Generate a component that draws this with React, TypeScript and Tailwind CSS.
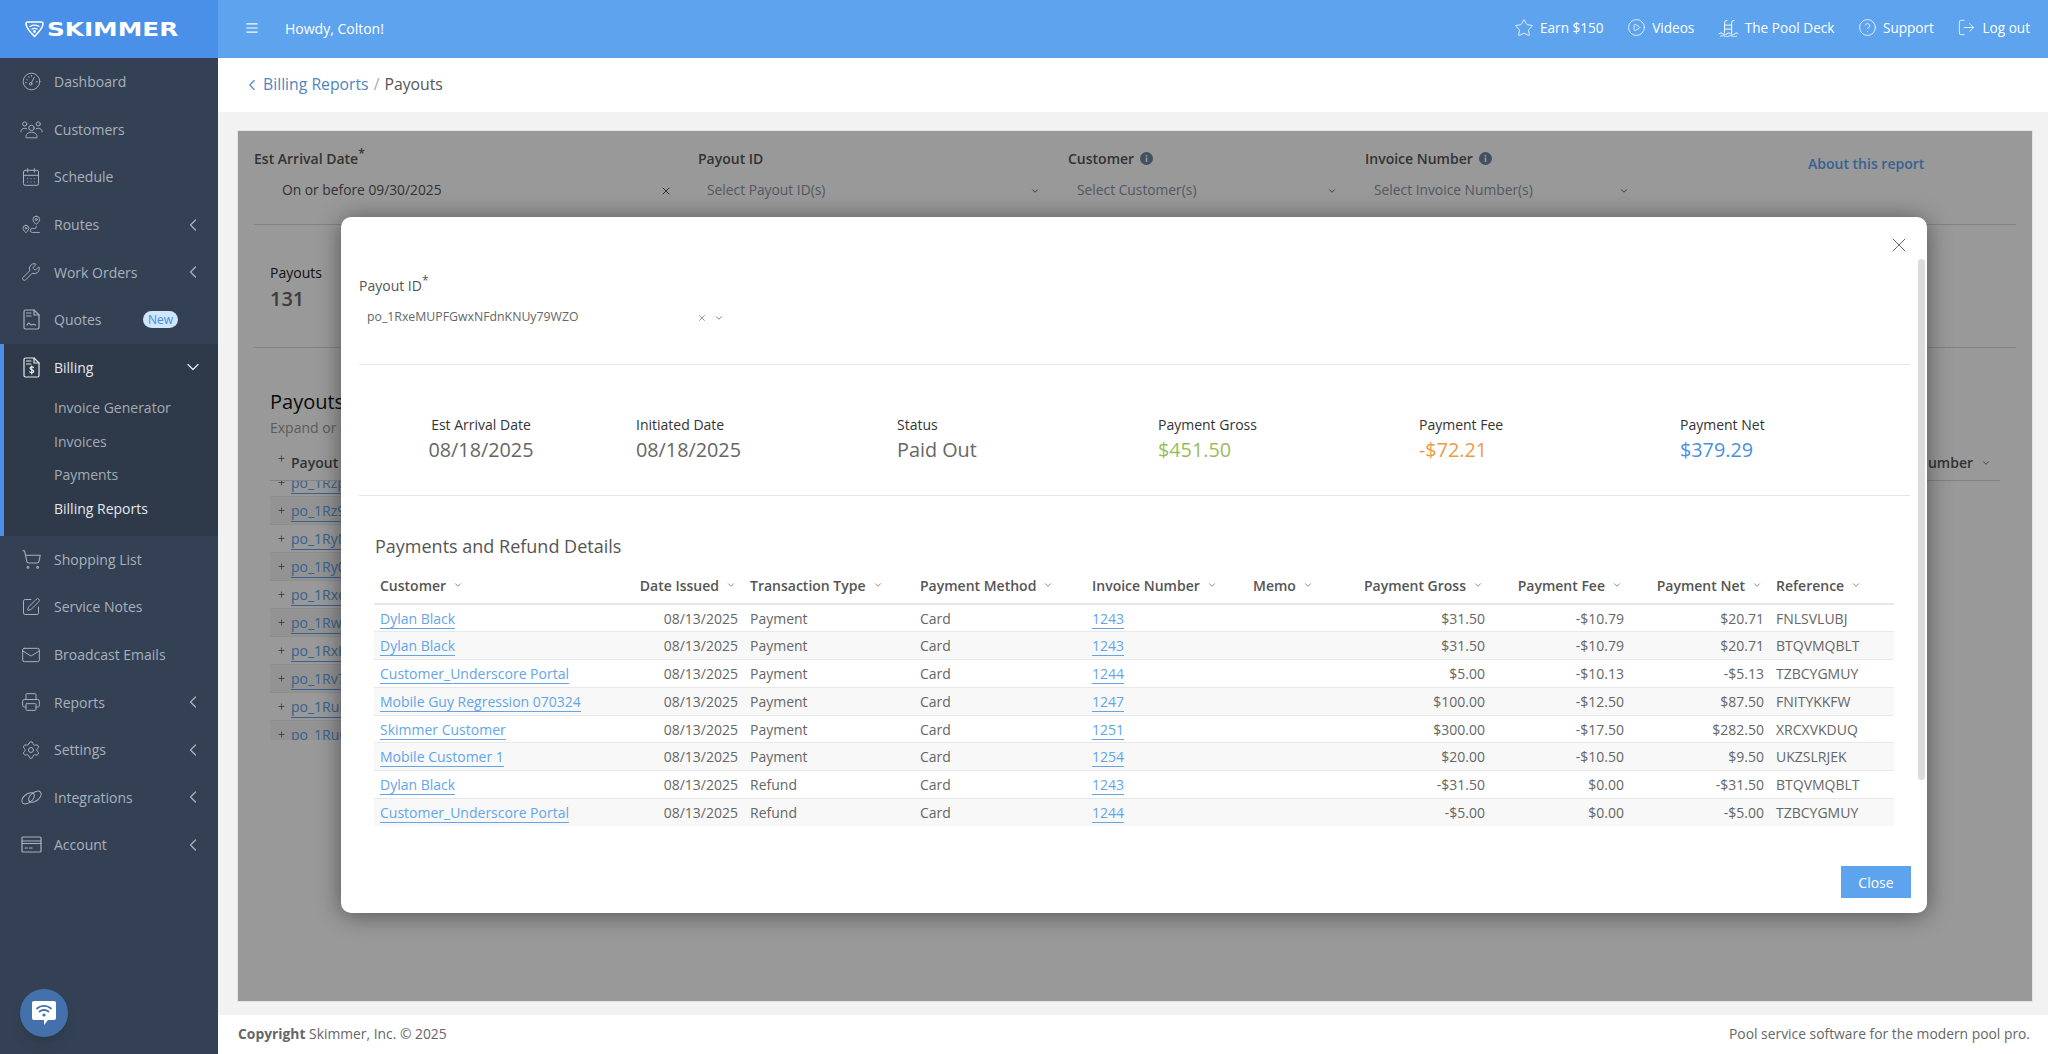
import React from "react";
import { ChevronLeft, ChevronDown, Wrench, ShoppingCart, SquarePen, Mail, Printer, Settings, CalendarDays, Star, CirclePlay, CircleHelp, LogOut, X, Plus, Menu } from "lucide-react";

const Svg = ({ w = 20, h = 20, vb = "0 0 24 24", children }: { w?: number; h?: number; vb?: string; children: React.ReactNode }) => (
  <svg width={w} height={h} viewBox={vb} fill="none" stroke="currentColor" strokeWidth={1.2} strokeLinecap="round" strokeLinejoin="round">{children}</svg>
);

const Gauge = () => (
  <Svg w={19} h={19}>
    <circle cx="12" cy="12" r="10.5" />
    <circle cx="11" cy="15" r="1.6" />
    <path d="M12 13.6 15.5 6.5M6 9.5l.8.5M8.5 5.8l.4.9M12 4.5v1M4.5 13.5h1M18 12.5h1.5" />
  </Svg>
);
const People = () => (
  <Svg w={23} h={19} vb="0 0 29 24">
    <circle cx="6" cy="5" r="2.6" /><circle cx="23" cy="5" r="2.6" /><circle cx="14.5" cy="10" r="3.4" />
    <path d="M1 15c0-3 2-4.5 5-4.5 1 0 2 .2 2.6.6M28 15c0-3-2-4.5-5-4.5-1 0-2 .2-2.6.6M7.5 22c-.5-4 2.5-6.5 7-6.5s7.500 2.500 7 6.500z" />
  </Svg>
);
const RouteIcon = () => (
  <Svg w={19} h={19}>
    <path d="M18 1.500a4.300 4.300 0 0 1 4.300 4.300c0 2.500-4.300 6.200-4.300 6.200s-4.300-3.700-4.300-6.200A4.300 4.300 0 0 1 18 1.500z" />
    <circle cx="18" cy="5.700" r="1.300" />
    <path d="M5 13a3.700 3.700 0 0 1 3.700 3.700C8.700 19 5 22.500 5 22.500S1.300 19 1.300 16.700A3.700 3.700 0 0 1 5 13z" />
    <circle cx="5" cy="16.700" r="1" />
    <path d="M18 14.500v.5a2 2 0 0 1-2 2h-3a2.500 2.500 0 0 0 0 5h9" />
  </Svg>
);
const Doc = ({ dollar }: { dollar?: boolean }) => (
  <Svg w={17} h={21} vb="0 0 17 21">
    <path d="M3 1h8l5 5v12.500a1.500 1.500 0 0 1-1.500 1.500h-12A1.500 1.500 0 0 1 1 18.500v-16A1.500 1.500 0 0 1 2.500 1z" />
    <path d="M11 1v5h5M3.500 4h4.500M3.500 7h4.500" />
    {dollar ? (
      <path d="M10.500 10.500c-.5-.8-3.500-1-3.500.8 0 2 3.800 1 3.800 3 0 1.800-3.300 1.500-4 .5M8.700 9v8" />
    ) : (
      <path d="M4 16c1-2 2-2.500 3-1s2 1 3 .500 1.500 0 2.500.5" />
    )}
  </Svg>
);
const Chain = () => (
  <Svg w={23} h={17} vb="0 0 27 20">
    <ellipse cx="9.500" cy="11" rx="8.500" ry="5" transform="rotate(-38 9.500 11)" />
    <ellipse cx="17.500" cy="9" rx="8.500" ry="5" transform="rotate(-38 17.500 9)" />
  </Svg>
);
const Card = () => (
  <Svg w={21} h={17} vb="0 0 21 17">
    <rect x="1" y="1" width="19" height="15" rx="1" />
    <path d="M1 5h19M1 7.500h19M4 12h2.500M8.500 12H11" />
  </Svg>
);
const Pool = () => (
  <Svg w={21} h={19} vb="0 0 26 24">
    <path d="M8 19V6a3 3 0 0 1 3-3M17 19V6a3 3 0 0 1 3-3M8 9h9M8 14h9" />
    <path d="M1 20c2-1.500 3-1.500 5 0s3 1.500 5 0 3-1.500 5 0 3 1.500 5 0 3-1.500 4 0M3 23c2-1 3-1 5 0s3 1 5 0 3-1 5 0 3 1 5 0" />
  </Svg>
);
const InfoDot = () => (
  <svg width="13" height="13" viewBox="0 0 13 13">
    <circle cx="6.500" cy="6.500" r="6.500" fill="#6f86a3" />
    <rect x="5.700" y="5.500" width="1.600" height="4.500" fill="#fff" />
    <rect x="5.700" y="3" width="1.600" height="1.600" fill="#fff" />
  </svg>
);

const Logo = () => (
  <div className="flex items-center text-white">
    <svg width="19" height="17" viewBox="0 0 19 17" fill="none" stroke="currentColor" strokeWidth="1.600" strokeLinecap="round" strokeLinejoin="round">
      <path d="M1 3c0-1 1-2 2-2h13c1 0 2 1 2 2 0 4-4 8-8.500 12.500C5 11 1 7 1 3z" />
      <path d="M5 5.500c2.500-1.500 6.500-1.500 9 0M7 8c1.500-.8 3.500-.8 5 0" strokeWidth="1.300" />
      <circle cx="9.500" cy="10.500" r=".6" fill="currentColor" />
    </svg>
    <span className="ml-[3px] inline-block origin-left scale-x-[1.3] font-['DejaVu_Sans',sans-serif] text-[19px] leading-none font-bold">SKIMMER</span>
  </div>
);

const NavRow = ({ icon, label, arrow, badge }: { icon: React.ReactNode; label: string; arrow?: boolean; badge?: boolean }) => (
  <div className="flex h-[47.6px] items-center pr-[15px] text-[14px] text-[#a8b1bc]">
    <span className="flex w-[54px] shrink-0 justify-center pl-[14px] pr-[6px]">{icon}</span>
    <span>{label}</span>
    {arrow && <ChevronLeft size={20} strokeWidth={1.5} className="ml-auto" />}
    {badge && <span className="mr-[25px] ml-auto flex h-[17px] w-[35px] items-center justify-center rounded-full bg-[#cfe6fb] text-[12px] leading-none text-[#3f8fdf]">New</span>}
  </div>
);

const Sidebar = () => (
  <aside className="relative flex h-full w-[218px] shrink-0 flex-col bg-[#344154]">
    <div className="flex h-[58px] shrink-0 items-center bg-[#4a90e8] pl-[25px]"><Logo /></div>
    <NavRow icon={<Gauge />} label="Dashboard" />
    <NavRow icon={<People />} label="Customers" />
    <NavRow icon={<CalendarDays size={20} strokeWidth={1.2} />} label="Schedule" />
    <NavRow icon={<RouteIcon />} label="Routes" arrow />
    <NavRow icon={<Wrench size={20} strokeWidth={1.2} />} label="Work Orders" arrow />
    <NavRow icon={<Doc />} label="Quotes" badge />
    <div className="h-[192px] border-l-4 border-[#4a90e8] bg-[#2e3a4a] text-[14px]">
      <div className="flex h-[47.600px] items-center pr-[15px] text-[#e4e7ea]">
        <span className="flex w-[50px] shrink-0 justify-center pl-[10px] pr-[6px]"><Doc dollar /></span>
        <span>Billing</span>
        <ChevronDown size={20} strokeWidth={1.500} className="ml-auto" />
      </div>
      <div className="flex flex-col pl-[50px] text-[#a3abb6]">
        <div className="flex h-[33.500px] items-center">Invoice Generator</div>
        <div className="flex h-[33.500px] items-center">Invoices</div>
        <div className="flex h-[33.500px] items-center">Payments</div>
        <div className="flex h-[33.500px] items-center text-[#e4e7ea]">Billing Reports</div>
      </div>
    </div>
    <NavRow icon={<ShoppingCart size={21} strokeWidth={1.2} />} label="Shopping List" />
    <NavRow icon={<SquarePen size={20} strokeWidth={1.2} />} label="Service Notes" />
    <NavRow icon={<Mail size={20} strokeWidth={1.2} />} label="Broadcast Emails" />
    <NavRow icon={<Printer size={20} strokeWidth={1.2} />} label="Reports" arrow />
    <NavRow icon={<Settings size={20} strokeWidth={1.2} />} label="Settings" arrow />
    <NavRow icon={<Chain />} label="Integrations" arrow />
    <NavRow icon={<Card />} label="Account" arrow />
    <button className="absolute bottom-[17px] left-[20px] flex h-[48px] w-[48px] items-center justify-center rounded-full bg-[#4470ab] shadow-lg">
      <svg width="26" height="26" viewBox="0 0 26 26">
        <path d="M3 1h20a2 2 0 0 1 2 2v15a2 2 0 0 1-2 2h-6l-4 5v-5H3a2 2 0 0 1-2-2V3a2 2 0 0 1 2-2z" fill="#fff" />
        <path d="M6 8.500c4-3.500 10-3.500 14 0M8.500 11.500c2.500-2 6.500-2 9 0" stroke="#4470ab" strokeWidth="1.800" fill="none" strokeLinecap="round" />
        <circle cx="13" cy="15" r="1.600" fill="#4470ab" />
      </svg>
    </button>
  </aside>
);

const TopItem = ({ icon, label }: { icon: React.ReactNode; label: string }) => (
  <div className="flex items-center gap-[6px]">{icon}<span>{label}</span></div>
);

const TopBar = () => (
  <header className="flex h-[58px] shrink-0 items-center bg-[#5ea3ee] pr-[18px] pb-[2px] pl-[27px] text-[14px] text-white">
    <Menu size={14} strokeWidth={2} className="scale-x-110" />
    <span className="ml-[26px]">Howdy, Colton!</span>
    <div className="ml-auto flex items-center gap-[23.5px] text-[13.6px]">
      <TopItem icon={<Star size={20} strokeWidth={1} />} label="Earn $150" />
      <TopItem icon={<CirclePlay size={19} strokeWidth={1} />} label="Videos" />
      <TopItem icon={<Pool />} label="The Pool Deck" />
      <TopItem icon={<CircleHelp size={19} strokeWidth={1} />} label="Support" />
      <TopItem icon={<LogOut size={19} strokeWidth={1} />} label="Log out" />
    </div>
  </header>
);

const Req = () => <sup className="text-[12px] leading-none">*</sup>;

const Filter = ({ label, info, width, value, clear, req }: { label: string; info?: boolean; width: string; value: string; clear?: boolean; req?: boolean }) => (
  <div className={`shrink-0 ${width}`}>
    <div className="flex h-[19px] items-center gap-[6px] text-[14px] font-semibold text-[#555]">
      <span>{label}{req && <Req />}</span>
      {info && <InfoDot />}
    </div>
    <div className={`mt-[13px] flex h-[19px] items-center pr-[28px] text-[13.8px] ${clear ? "pl-[28px] text-[#555]" : "pl-[9px] text-[#8a93a3]"}`}>
      <span>{value}</span>
      {clear ? <X size={12} className="ml-auto -mr-[2px]" /> : <ChevronDown size={10} strokeWidth={2} className="ml-auto text-[#444]" />}
    </div>
  </div>
);

const bgRows = ["po_1RzpLm", "po_1Rz9Tk", "po_1RyNqE", "po_1Ry0Xa", "po_1RxeMU", "po_1RwBvC", "po_1RxHnD", "po_1Rv7Gs", "po_1RuKpW", "po_1RuQfZ"];

const Background = () => (
  <div className="px-[16px]">
    <div className="flex h-[94px] border-b border-[#d9d9d9] pt-[18px]">
      <Filter label="Est Arrival Date" req width="w-[444px]" value="On or before 09/30/2025" clear />
      <Filter label="Payout ID" width="w-[370px]" value="Select Payout ID(s)" />
      <Filter label="Customer" info width="w-[297px]" value="Select Customer(s)" />
      <Filter label="Invoice Number" info width="w-[292px]" value="Select Invoice Number(s)" />
      <a className="ml-[151px] h-fit pt-[4px] text-[14px] font-semibold text-[#5ea3ee]">About this report</a>
    </div>
    <div className="h-[123px] border-b border-[#d9d9d9] pt-[38px] pl-[16px]">
      <div className="text-[14px] leading-[19px] text-[#222]">Payouts</div>
      <div className="mt-[3px] text-[20px] leading-[27px] font-semibold text-[#666]">131</div>
    </div>
    <div className="pr-[16px] pl-[16px]">
      <div className="mt-[40px] text-[20px] leading-[27px] font-medium text-[#111]">Payouts</div>
      <div className="mt-[3px] text-[14px] leading-[19px] text-[#999]">Expand or collapse a payout to view its details</div>
      <div className="mt-[15px] flex h-[29px] items-start border-b border-[#d9d9d9] pl-[7px] text-[14px] font-semibold text-[#555]">
        <Plus size={9} strokeWidth={2} className="mt-[2px]" />
        <span className="ml-[5px]">Payout ID</span>
        <span className="ml-auto flex items-center gap-[8px] pr-[9px]">Invoice Number<ChevronDown size={10} strokeWidth={2} /></span>
      </div>
      <div className="h-[259px] w-[1200px] overflow-hidden">
        <div className="-mt-[12px]">
          {bgRows.map((r, i) => (
            <div key={r} className={`flex h-[28px] items-center border-b border-[#ececec] pl-[7px] text-[14px] ${i % 2 ? "bg-[#f6f6f6]" : "bg-white"}`}>
              <Plus size={9} strokeWidth={2} className="text-[#555]" />
              <a className="ml-[5px] border-b border-[#5ea3ee] text-[#5ea3ee]">{r}</a>
            </div>
          ))}
        </div>
      </div>
    </div>
  </div>
);

type Row = { c: string; t: string; i: string; g: string; f: string; n: string; r: string };
const rows: Row[] = [
  { c: "Dylan Black", t: "Payment", i: "1243", g: "$31.50", f: "-$10.79", n: "$20.71", r: "FNLSVLUBJ" },
  { c: "Dylan Black", t: "Payment", i: "1243", g: "$31.50", f: "-$10.79", n: "$20.71", r: "BTQVMQBLT" },
  { c: "Customer_Underscore Portal", t: "Payment", i: "1244", g: "$5.00", f: "-$10.13", n: "-$5.13", r: "TZBCYGMUY" },
  { c: "Mobile Guy Regression 070324", t: "Payment", i: "1247", g: "$100.00", f: "-$12.50", n: "$87.50", r: "FNITYKKFW" },
  { c: "Skimmer Customer", t: "Payment", i: "1251", g: "$300.00", f: "-$17.50", n: "$282.50", r: "XRCXVKDUQ" },
  { c: "Mobile Customer 1", t: "Payment", i: "1254", g: "$20.00", f: "-$10.50", n: "$9.50", r: "UKZSLRJEK" },
  { c: "Dylan Black", t: "Refund", i: "1243", g: "-$31.50", f: "$0.00", n: "-$31.50", r: "BTQVMQBLT" },
  { c: "Customer_Underscore Portal", t: "Refund", i: "1244", g: "-$5.00", f: "$0.00", n: "-$5.00", r: "TZBCYGMUY" },
];

const Th = ({ label, right, w }: { label: string; right?: boolean; w: string }) => (
  <th className={`${w} h-[36px] text-[14px] font-semibold text-[#555] ${right ? "pr-[8px] pl-[4px] text-right" : "px-[6px] text-left"}`}>
    {label}
    <ChevronDown size={10} strokeWidth={2} className="ml-[7px] inline-block align-[1px] text-[#777]" />
  </th>
);

const Stat = ({ label, value, color, first }: { label: string; value: string; color: string; first?: boolean }) => (
  <div className={`w-[261px] shrink-0 ${first ? "pl-[53px] text-center" : ""}`}>
    <div className={`text-[14px] leading-[19px] text-[#333] ${first ? "w-[106px]" : ""}`}>{label}</div>
    <div className={`mt-[2px] text-[19.8px] leading-[27px] font-medium ${color} ${first ? "w-[106px] whitespace-nowrap" : ""}`}>{value}</div>
  </div>
);

const Modal = () => (
  <div className="absolute top-[86px] left-[103px] flex h-[696px] w-[1586px] flex-col rounded-[10px] bg-white pr-[17px] pl-[18px] shadow-[0_2px_24px_rgba(0,0,0,0.45)]">
    <X size={24} strokeWidth={0.9} className="absolute top-[16px] right-[16px] text-[#555]" />
    <div className="absolute top-[42px] right-[2px] h-[521px] w-[7px] rounded-sm bg-[#dcdcdc]" />
    <div className="h-[148px] border-b border-[#e6e6e6] pt-[59px]">
      <div className="text-[14px] leading-[19px] font-medium text-[#555]">Payout ID<Req /></div>
      <div className="mt-[13px] flex h-[19px] w-[365px] items-center pl-[8px] text-[12.3px] text-[#666]">
        <span>po_1RxeMUPFGwxNFdnKNUy79WZO</span>
        <X size={10} className="ml-auto text-[#888]" />
        <ChevronDown size={10} strokeWidth={2} className="ml-[7px] text-[#666]" />
      </div>
    </div>
    <div className="flex h-[131px] border-b border-[#e6e6e6] pt-[50px] pl-[16px]">
      <Stat first label="Est Arrival Date" value="08/18/2025" color="text-[#666]" />
      <Stat label="Initiated Date" value="08/18/2025" color="text-[#666]" />
      <Stat label="Status" value="Paid Out" color="text-[#666]" />
      <Stat label="Payment Gross" value="$451.50" color="text-[#9bbb59]" />
      <Stat label="Payment Fee" value="-$72.21" color="text-[#ec9a45]" />
      <Stat label="Payment Net" value="$379.29" color="text-[#4a90e2]" />
    </div>
    <h3 className="mt-[38px] pl-[16px] text-[18px] leading-[25px] font-normal text-[#555]">Payments and Refund Details</h3>
    <table className="mt-[9px] ml-[15px] w-[1520px] table-fixed border-collapse text-[14px] text-[#666]">
      <thead>
        <tr className="border-b-2 border-[#e6e6e6]">
          <Th label="Customer" w="w-[260px]" />
          <Th label="Date Issued" right w="w-[110px]" />
          <Th label="Transaction Type" w="w-[170px]" />
          <Th label="Payment Method" w="w-[172px]" />
          <Th label="Invoice Number" w="w-[161px]" />
          <Th label="Memo" w="w-[111px]" />
          <Th label="Payment Gross" right w="w-[133px]" />
          <Th label="Payment Fee" right w="w-[139px]" />
          <Th label="Payment Net" right w="w-[140px]" />
          <Th label="Reference" w="w-[124px]" />
        </tr>
      </thead>
      <tbody>
        {rows.map((r, i) => (
          <tr key={i} className={`h-[27.800px] border-b border-[#e8e8e8] last:border-b-0 ${i % 2 ? "bg-[#f8f8f8]" : "bg-white"}`}>
            <td className="px-[6px]"><a className="border-b border-[#64a5e8] text-[#64a5e8]">{r.c}</a></td>
            <td className="px-[6px] text-right">08/13/2025</td>
            <td className="px-[6px]">{r.t}</td>
            <td className="px-[6px]">Card</td>
            <td className="px-[6px]"><a className="border-b border-[#64a5e8] text-[#64a5e8]">{r.i}</a></td>
            <td className="px-[6px]"></td>
            <td className="px-[6px] text-right">{r.g}</td>
            <td className="px-[6px] text-right">{r.f}</td>
            <td className="px-[6px] text-right">{r.n}</td>
            <td className="px-[6px]">{r.r}</td>
          </tr>
        ))}
      </tbody>
    </table>
    <div className="mt-auto -mr-[1px] flex justify-end pb-[15px]">
      <button className="h-[32px] w-[70px] bg-[#5ea3ee] text-[14px] font-medium text-white">Close</button>
    </div>
  </div>
);

export default function App() {
  return (
    <div className="flex h-screen w-full overflow-hidden font-['Open_Sans',sans-serif]">
      <Sidebar />
      <div className="flex min-w-0 flex-1 flex-col">
        <TopBar />
        <div className="flex h-[54px] shrink-0 items-center bg-white pb-[1px] pl-[25px] text-[15.75px]">
          <ChevronLeft size={18} strokeWidth={1.500} className="text-[#4f85bd]" />
          <a className="ml-[2px] text-[#4f85bd]">Billing Reports</a>
          <span className="mx-[5px] text-[#aaa]">/</span>
          <span className="text-[#555]">Payouts</span>
        </div>
        <main className="min-h-0 flex-1 bg-[#f2f2f3] pt-[19px] pr-[16px] pb-[14px] pl-[20px]">
          <div className="relative h-full overflow-hidden bg-white shadow-[0_0_0_1px_#e4e4e4]">
            <Background />
            <div className="absolute inset-0 bg-black/40" />
            <Modal />
          </div>
        </main>
        <footer className="flex h-[39px] shrink-0 items-center justify-between bg-white pr-[18px] pl-[20px] text-[13.85px] text-[#666]">
          <span><b className="font-bold">Copyright</b> Skimmer, Inc. © 2025</span>
          <span>Pool service software for the modern pool pro.</span>
        </footer>
      </div>
    </div>
  );
}
